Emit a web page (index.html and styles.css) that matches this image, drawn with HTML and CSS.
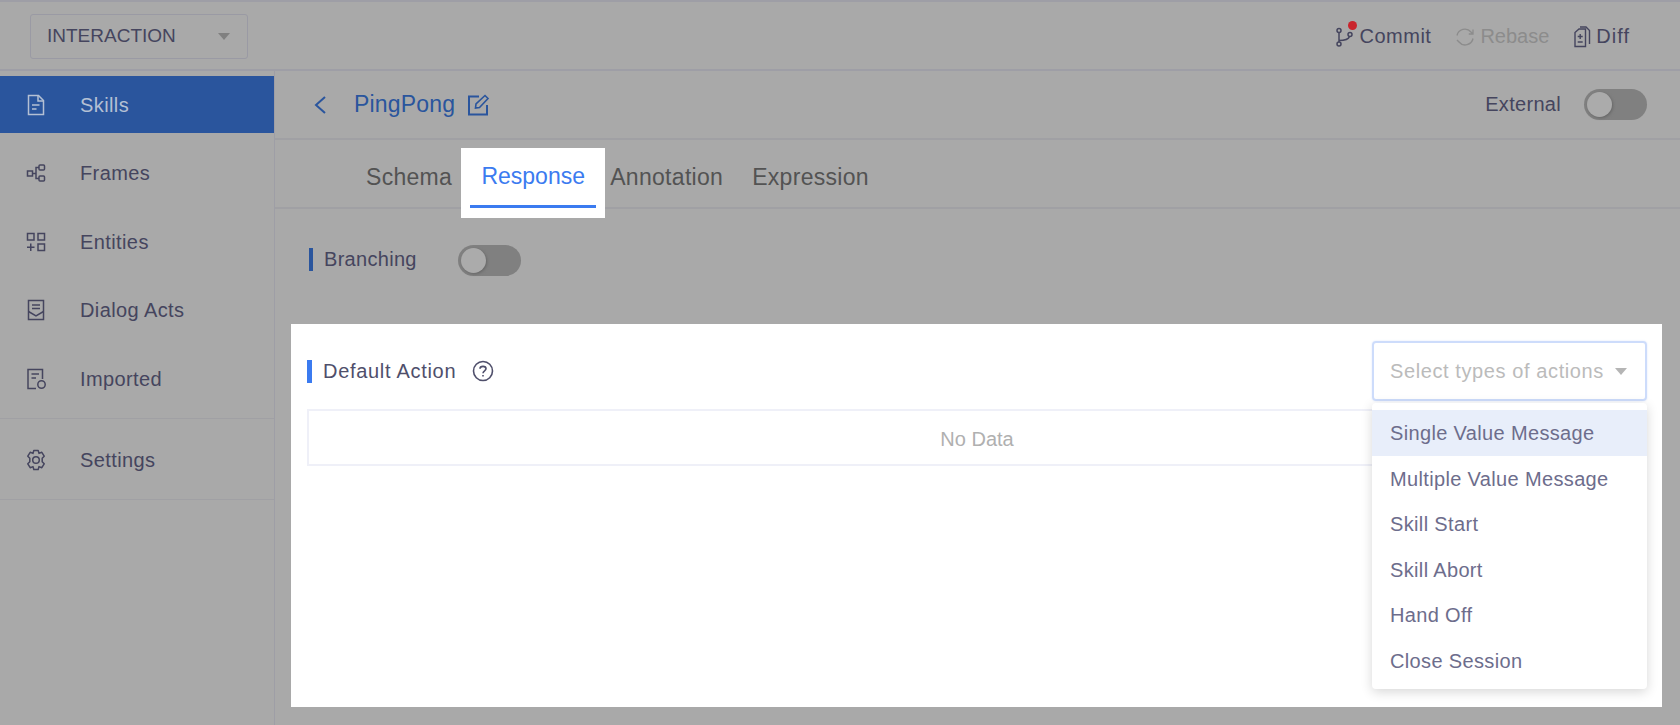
FILE: index.html
```html
<!DOCTYPE html>
<html lang="en">

<head>
    <meta charset="UTF-8">
    <meta name="viewport" content="width=device-width, initial-scale=1.0">
    <title>PingPong</title>
    <link rel="stylesheet" href="styles.css">
</head>

<body>
    <header class="topbar">
        <div class="env-select">
            <span>INTERACTION</span>
            <i class="caret"></i>
        </div>
        <div class="top-actions">
            <a class="top-action commit">
                <svg width="20" height="20" viewBox="0 0 20 20" fill="none" stroke="currentColor" stroke-width="1.5">
                    <circle cx="4" cy="3.5" r="2" />
                    <circle cx="4" cy="17" r="2" />
                    <circle cx="15" cy="7.5" r="2" />
                    <path d="M4 5.500V15M4 13.500C9 13.500 13.500 12.500 14.500 9.500" />
                </svg>
                <b class="dot"></b>
                <span>Commit</span>
            </a>
            <a class="top-action disabled">
                <svg width="20" height="20" viewBox="0 0 20 20" fill="none" stroke="currentColor" stroke-width="1.4">
                    <path d="M2 8.500A8 8 0 0 1 16 5L18 7M18 2.500V7H13.800" stroke-width="1.300" />
                    <path d="M18 11.500A8 8 0 0 1 4 15L2 13" />
                </svg>
                <span>Rebase</span>
            </a>
            <a class="top-action diff">
                <svg width="18" height="22" viewBox="0 0 18 22" fill="none" stroke="currentColor" stroke-width="1.4">
                    <path d="M2 6.500L6 3H12.500V20.500H2Z" />
                    <path d="M7 1H13L16.500 4.500V18" />
                    <path d="M7.200 8V13M4.700 10.500H9.700M4.700 16H9.700" />
                </svg>
                <span>Diff</span>
            </a>
        </div>
    </header>

    <div class="layout">
        <aside class="sidebar">
            <div class="nav-group">
                <a class="nav-item active">
                    <svg width="24" height="24" viewBox="0 0 24 24" fill="none" stroke="currentColor" stroke-width="1.500">
                        <path d="M4.500 2.500H14.500L19.500 7.500V21.500H4.500Z" />
                        <path d="M14 2.500V8H19.500M8 12H15.500M8 16H12.500" />
                    </svg>
                    <span>Skills</span>
                </a>
                <a class="nav-item">
                    <svg width="24" height="24" viewBox="0 0 24 24" fill="none" stroke="currentColor" stroke-width="1.500">
                        <rect x="3.500" y="10" width="5" height="5" />
                        <rect x="15" y="4" width="5.500" height="5" rx="1" />
                        <rect x="15" y="15" width="5.500" height="5" rx="1" />
                        <path d="M8.500 12.500H12M15 6.500H12V17.500H15" />
                    </svg>
                    <span>Frames</span>
                </a>
                <a class="nav-item">
                    <svg width="24" height="24" viewBox="0 0 24 24" fill="none" stroke="currentColor" stroke-width="1.500">
                        <rect x="3.500" y="3.500" width="6.500" height="6.500" />
                        <rect x="14" y="3.500" width="6.500" height="6.500" />
                        <rect x="14" y="14" width="6.500" height="6.500" />
                        <path d="M6.750 13.500V21M3 17.250H10.500" />
                    </svg>
                    <span>Entities</span>
                </a>
                <a class="nav-item">
                    <svg width="24" height="24" viewBox="0 0 24 24" fill="none" stroke="currentColor" stroke-width="1.500">
                        <rect x="4.500" y="2.500" width="15" height="19" />
                        <path d="M8 7H16M8 10.500H16M4.500 13.500L12 18L19.500 13.500" />
                    </svg>
                    <span>Dialog Acts</span>
                </a>
                <a class="nav-item">
                    <svg width="24" height="24" viewBox="0 0 24 24" fill="none" stroke="currentColor" stroke-width="1.500">
                        <path d="M12 21.500H4V2.500H18.500V12" />
                        <path d="M7.500 7H15M7.500 11H12" />
                        <circle cx="17.500" cy="17.500" r="3.700" />
                    </svg>
                    <span>Imported</span>
                </a>
            </div>
            <div class="nav-group">
                <a class="nav-item">
                    <svg width="24" height="24" viewBox="0 0 24 24" fill="none" stroke="currentColor" stroke-width="1.500">
                        <path d="M9.800 2.500H14.200L15 5.400L17.800 4.300L20.200 8.200L18.200 10.300V13.700L20.200 15.800L17.800 19.700L15 18.600L14.200 21.500H9.800L9 18.600L6.200 19.700L3.800 15.800L5.800 13.700V10.300L3.800 8.200L6.200 4.300L9 5.400Z" stroke-linejoin="round" />
                        <circle cx="12" cy="12" r="3.300" />
                    </svg>
                    <span>Settings</span>
                </a>
            </div>
        </aside>

        <main class="content">
            <div class="title-row">
                <div class="title-left">
                    <svg class="back" width="14" height="20" viewBox="0 0 14 20" fill="none" stroke="currentColor" stroke-width="2">
                        <path d="M12 2L3 10L12 18" />
                    </svg>
                    <h1>PingPong</h1>
                    <svg width="24" height="24" viewBox="0 0 24 24" fill="none" stroke="currentColor" stroke-width="2">
                        <path d="M13 3.500H3V21.500H21V12" />
                        <path d="M9.500 15L10 11L19 2.500L22 5.500L13.500 14.500Z" stroke-width="1.600" />
                    </svg>
                </div>
                <div class="title-right">
                    <span>External</span>
                    <div class="switch"><i></i></div>
                </div>
            </div>

            <nav class="tabs">
                <a class="tab">Schema</a>
                <a class="tab current"><span>Response</span></a>
                <a class="tab">Annotation</a>
                <a class="tab">Expression</a>
            </nav>

            <div class="branching">
                <span class="mark">Branching</span>
                <div class="switch"><i></i></div>
            </div>

            <section class="panel">
                <div class="panel-head">
                    <span class="mark blue">Default Action</span>
                    <svg class="help" width="22" height="22" viewBox="0 0 22 22" fill="none" stroke="currentColor" stroke-width="1.600">
                        <circle cx="11" cy="11" r="9.500" />
                        <path d="M8 8.800C8 5.500 14 5.500 14 8.800C14 10.800 11 10.800 11 13.200" />
                        <path d="M11 15V16.600" />
                    </svg>
                    <div class="type-select">
                        <div class="type-box">
                            <span>Select types of actions</span>
                            <i class="caret"></i>
                        </div>
                        <ul class="type-menu">
                            <li class="hover">Single Value Message</li>
                            <li>Multiple Value Message</li>
                            <li>Skill Start</li>
                            <li>Skill Abort</li>
                            <li>Hand Off</li>
                            <li>Close Session</li>
                        </ul>
                    </div>
                </div>
                <div class="empty">No Data</div>
            </section>
        </main>
    </div>
</body>

</html>
```

FILE: styles.css
```css
* {
    box-sizing: border-box;
}

body {
    margin: 0;
    height: 725px;
    overflow: hidden;
    background-color: #a9a9a9;
    color: #45455e;
    font-family: "Liberation Sans", Arial, sans-serif;
    font-size: 20px;
}

.topbar {
    height: 71px;
    border-top: 2px solid #9e9ea6;
    border-bottom: 2px solid #9e9ea6;
    padding: 0 50px 0 30px;
    display: flex;
    justify-content: space-between;
    align-items: center;
}

.env-select {
    width: 218px;
    height: 45px;
    margin-top: 1px;
    border: 1px solid #9a9aa4;
    border-radius: 3px;
    padding: 0 17px 0 16px;
    display: flex;
    justify-content: space-between;
    align-items: center;
    font-size: 19px;
}

.caret {
    width: 0;
    height: 0;
    border-left: 6.500px solid transparent;
    border-right: 6.500px solid transparent;
    border-top: 7px solid #808080;
}

.top-actions {
    display: flex;
    gap: 24px;
    padding-top: 2px;
}

.top-action {
    position: relative;
    display: flex;
    align-items: center;
    gap: 5px;
    letter-spacing: 0.5px;
}

.top-action.disabled {
    color: #8c8c8c;
    letter-spacing: 0;
}

.top-action.diff {
    letter-spacing: 1px;
}

.dot {
    position: absolute;
    left: 13px;
    top: -4px;
    width: 9px;
    height: 9px;
    border-radius: 50%;
    background-color: #c9242c;
}

.layout {
    display: flex;
    height: 654px;
}

.sidebar {
    width: 275px;
    flex-shrink: 0;
    border-right: 1px solid #9e9ea6;
}

.nav-group {
    padding: 5px 0 11px;
    border-bottom: 1px solid #a0a0a4;
    display: flex;
    flex-direction: column;
    gap: 11.500px;
}

.nav-group + .nav-group {
    padding-top: 12px;
}

.nav-item {
    height: 57px;
    padding-left: 24px;
    display: flex;
    align-items: center;
    gap: 32px;
    letter-spacing: 0.4px;
}

.nav-item span {
    padding-top: 1px;
}

.nav-item.active {
    background-color: #2a559d;
    color: #b4c0d4;
}

.content {
    flex: 1;
    min-width: 0;
}

.title-row {
    height: 69px;
    border-bottom: 2px solid #a0a0a4;
    padding: 0 33px 0 38px;
    display: flex;
    justify-content: space-between;
    align-items: center;
}

.title-left {
    display: flex;
    align-items: center;
    gap: 11px;
    color: #2a559d;
}

.back {
    margin-right: 16px;
}

h1 {
    margin: 0;
    font-size: 23px;
    font-weight: normal;
    letter-spacing: 0.2px;
}

.title-right {
    display: flex;
    align-items: center;
    gap: 23px;
    letter-spacing: 0.3px;
}

.switch {
    width: 63px;
    height: 31px;
    border-radius: 16px;
    background-color: #808080;
    padding: 3px;
}

.switch i {
    display: block;
    width: 25px;
    height: 25px;
    border-radius: 50%;
    background-color: #ababab;
    box-shadow: 1px 1px 3px #666;
}

.tabs {
    height: 69px;
    border-bottom: 2px solid #a0a0a4;
    padding: 8px 0 0 91px;
    display: flex;
}

.tab {
    height: 59px;
    display: flex;
    align-items: center;
    margin-right: 29px;
    font-size: 23px;
    letter-spacing: 0.3px;
    color: #535353;
}

.tab.current {
    height: 70px;
    width: 144px;
    margin: 0 5px 0 -20px;
    padding: 0 9px;
    background-color: #fff;
    color: #3b7bf0;
    position: relative;
    align-items: flex-start;
    letter-spacing: 0;
}

.tab.current span {
    flex: 1;
    height: 60px;
    border-bottom: 3px solid #3b7bf0;
    text-align: center;
    line-height: 57px;
}

.branching {
    height: 115px;
    padding: 36px 0 0 34px;
    display: flex;
    align-items: flex-start;
    gap: 41px;
}

.mark {
    display: block;
    height: 23px;
    line-height: 23px;
    border-left: 4px solid #2a559d;
    padding-left: 11px;
    letter-spacing: 0.3px;
}

.branching .mark {
    margin-top: 3px;
}

.panel {
    margin: 0 18px 0 16px;
    height: 383px;
    background-color: #fff;
    padding: 17px 15px 0 16px;
    color: #4f4f6b;
}

.panel-head {
    height: 60px;
    display: flex;
    align-items: center;
    position: relative;
}

.mark.blue {
    border-left: 5px solid #3b7bf0;
    padding-left: 11px;
    letter-spacing: 0.7px;
}

.help {
    margin-left: 16px;
}

.type-select {
    position: absolute;
    right: 0;
    top: 0;
    width: 275px;
    z-index: 2;
}

.type-box {
    height: 60px;
    border: 2px solid #cddcfb;
    border-radius: 4px;
    padding: 0 18px 0 16px;
    display: flex;
    justify-content: space-between;
    align-items: center;
    color: #bbbbbb;
    box-shadow: 0 0 2px #dbe5fb;
    letter-spacing: 0.6px;
}

.type-box .caret {
    border-top-color: #b5b5b5;
}

.type-menu {
    list-style: none;
    margin: 2px 0 0;
    padding: 7px 0 6px;
    background-color: #fff;
    border-radius: 4px;
    box-shadow: 0 3px 12px rgba(0, 0, 0, 0.16);
    color: #6d6d8c;
}

.type-menu li {
    height: 45.500px;
    line-height: 47px;
    padding-left: 18px;
    letter-spacing: 0.35px;
}

.type-menu li.hover {
    background-color: #e8eefa;
}

.empty {
    height: 57px;
    margin-top: 8px;
    border: 2px solid #eff0f8;
    padding-top: 3px;
    display: flex;
    justify-content: center;
    align-items: center;
    color: #b0b0b0;
}
```
